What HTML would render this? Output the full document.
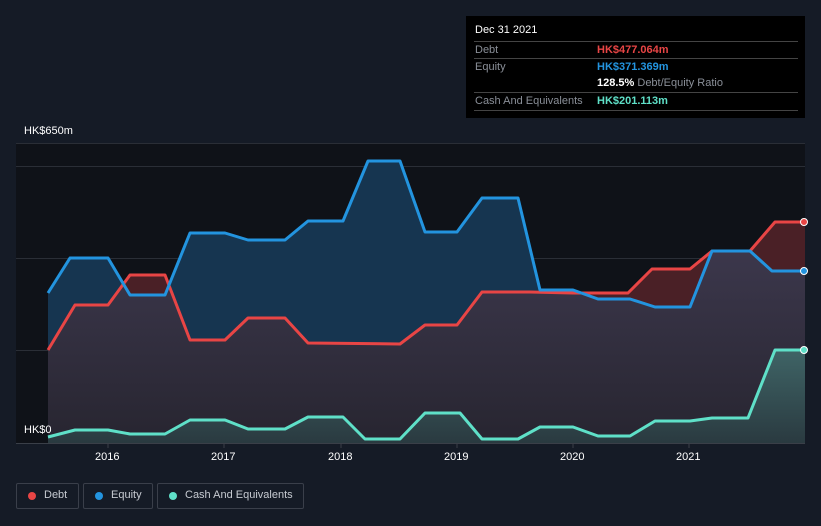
<!DOCTYPE html>
<html><head><meta charset="utf-8"><style>
body{margin:0;background:#151b26;width:821px;height:526px;overflow:hidden;font-family:"Liberation Sans",sans-serif;position:relative}
.tip{position:absolute;left:466px;top:16px;width:339px;height:102px;background:#000;}
.tip .h{position:absolute;left:9px;top:8px;color:#fff;font-size:11px}
.row{position:absolute;left:8px;width:324px;border-top:1px solid #444;height:17px;font-size:11px;color:#8a8f98}
.row span{position:absolute;top:2px}
.leg{position:absolute;top:483px;height:26px;border:1px solid #3a3f4a;border-radius:2px;color:#c7cbd2;font-size:11px;box-sizing:border-box}
.leg i{position:absolute;left:11px;top:8px;width:8px;height:8px;border-radius:50%}
.leg span{position:absolute;left:27px;top:5px}
.ax{position:absolute;color:#fff;font-size:11px}
</style></head><body>
<svg width="821" height="526" style="position:absolute;left:0;top:0">
<defs>
<clipPath id="eq"><path d="M48,293 L70,258 108,258 130,295 165,295 190,233 225,233 248,240 285,240 308,221 343,221 368,161 400,161 425,232 457,232 482,198 518,198 540,290 573,290 598,299 630,299 655,307 690,307 712,251 750,251 772,271 805,271 L805,443 48,443Z"/></clipPath>
<linearGradient id="pg" x1="0" y1="0" x2="0" y2="1"><stop offset="0" stop-color="#3f3a50"/><stop offset="1" stop-color="#272530"/></linearGradient>
<linearGradient id="cg" x1="0" y1="0" x2="0" y2="1"><stop offset="0" stop-color="#3f6466"/><stop offset="1" stop-color="#2a3a40"/></linearGradient>
</defs>
<rect x="16" y="143" width="789" height="300" fill="#0f1218"/>
<g stroke="#2a2e36" stroke-width="1"><line x1="16" y1="143.5" x2="805" y2="143.5"/><line x1="16" y1="166.5" x2="805" y2="166.5"/><line x1="16" y1="258.5" x2="805" y2="258.5"/><line x1="16" y1="350.5" x2="805" y2="350.5"/></g>
<path d="M48,350 L75,305 108,305 130,275 165,275 190,340 225,340 248,318 285,318 308,343 400,344 425,325 457,325 482,292 530,292 573,293 628,293 652,269 690,269 712,251 750,251 775,222 805,222 L805,443 48,443Z" fill="#4a2026"/>
<path d="M48,293 L70,258 108,258 130,295 165,295 190,233 225,233 248,240 285,240 308,221 343,221 368,161 400,161 425,232 457,232 482,198 518,198 540,290 573,290 598,299 630,299 655,307 690,307 712,251 750,251 772,271 805,271 L805,443 48,443Z" fill="#163550"/>
<path clip-path="url(#eq)" d="M48,350 L75,305 108,305 130,275 165,275 190,340 225,340 248,318 285,318 308,343 400,344 425,325 457,325 482,292 530,292 573,293 628,293 652,269 690,269 712,251 750,251 775,222 805,222 L805,443 48,443Z" fill="url(#pg)"/>
<path d="M48,437 L75,430 108,430 130,434 165,434 190,420 225,420 248,429 285,429 308,417 343,417 365,439 400,439 425,413 460,413 482,439 518,439 540,427 573,427 598,436 630,436 655,421 690,421 712,418 748,418 775,350 805,350 L805,443 48,443Z" fill="url(#cg)"/>
<g fill="none" stroke-width="3" stroke-linejoin="round">
<path d="M48,350 L75,305 108,305 130,275 165,275 190,340 225,340 248,318 285,318 308,343 400,344 425,325 457,325 482,292 530,292 573,293 628,293 652,269 690,269 712,251 750,251 775,222 805,222" stroke="#e84545"/>
<path d="M48,293 L70,258 108,258 130,295 165,295 190,233 225,233 248,240 285,240 308,221 343,221 368,161 400,161 425,232 457,232 482,198 518,198 540,290 573,290 598,299 630,299 655,307 690,307 712,251 750,251 772,271 805,271" stroke="#2394df"/>
<path d="M48,437 L75,430 108,430 130,434 165,434 190,420 225,420 248,429 285,429 308,417 343,417 365,439 400,439 425,413 460,413 482,439 518,439 540,427 573,427 598,436 630,436 655,421 690,421 712,418 748,418 775,350 805,350" stroke="#5fe0c8"/>
</g>
<circle cx="804" cy="222" r="3.5" fill="#e84545" stroke="#fff"/>
<circle cx="804" cy="271" r="3.5" fill="#2394df" stroke="#fff"/>
<circle cx="804" cy="350" r="3.5" fill="#5fe0c8" stroke="#fff"/>
<line x1="16" y1="443.5" x2="805" y2="443.5" stroke="#3a3f48"/>
<g stroke="#3a3f48"><line x1="108" y1="443" x2="108" y2="448"/><line x1="224" y1="443" x2="224" y2="448"/><line x1="341" y1="443" x2="341" y2="448"/><line x1="457" y1="443" x2="457" y2="448"/><line x1="573" y1="443" x2="573" y2="448"/><line x1="689" y1="443" x2="689" y2="448"/></g>
</svg>
<div class="ax" style="left:24px;top:125px">HK$650m</div>
<div class="ax" style="left:24px;top:424px">HK$0</div>
<div class="ax" style="left:95px;top:451px">2016</div>
<div class="ax" style="left:211px;top:451px">2017</div>
<div class="ax" style="left:328px;top:451px">2018</div>
<div class="ax" style="left:444px;top:451px">2019</div>
<div class="ax" style="left:560px;top:451px">2020</div>
<div class="ax" style="left:676px;top:451px">2021</div>
<div class="tip"><div class="h">Dec 31 2021</div>
<div class="row" style="top:25px"><span style="left:1px">Debt</span><span style="left:123px;color:#e84545;font-weight:bold">HK$477.064m</span></div>
<div class="row" style="top:42px"><span style="left:1px">Equity</span><span style="left:123px;color:#2394df;font-weight:bold">HK$371.369m</span></div>
<div class="row" style="top:59px;border-top:none"><span style="left:123px"><b style="color:#fff">128.5%</b> Debt/Equity Ratio</span></div>
<div class="row" style="top:76px;border-bottom:1px solid #444"><span style="left:1px">Cash And Equivalents</span><span style="left:123px;color:#5fe0c8;font-weight:bold">HK$201.113m</span></div>
</div>
<div class="leg" style="left:16px;width:63px"><i style="background:#e84545"></i><span>Debt</span></div>
<div class="leg" style="left:83px;width:70px"><i style="background:#2394df"></i><span>Equity</span></div>
<div class="leg" style="left:157px;width:147px"><i style="background:#5fe0c8"></i><span>Cash And Equivalents</span></div>
</body></html>
